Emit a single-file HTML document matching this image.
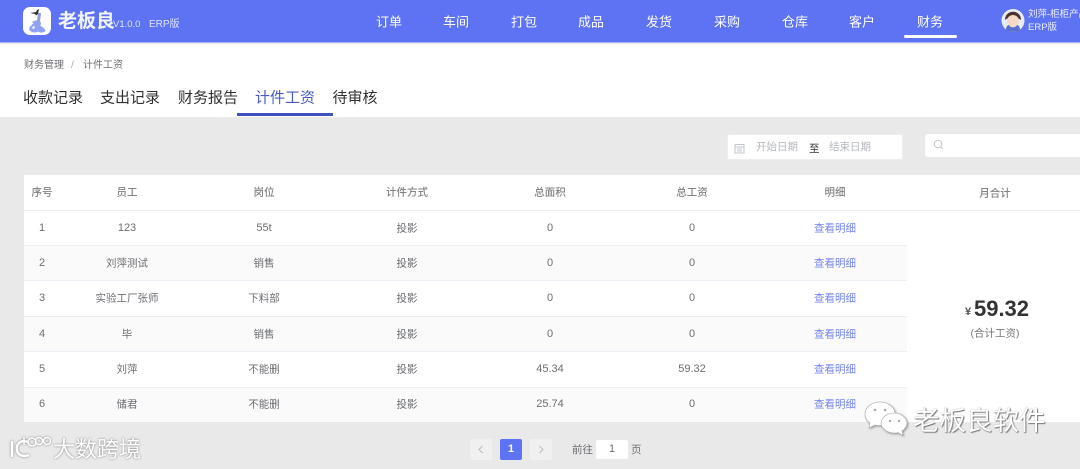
<!DOCTYPE html>
<html lang="zh"><head><meta charset="utf-8"><title>计件工资</title>
<style>
*{box-sizing:border-box}
html,body{margin:0;padding:0;width:1080px;height:469px;overflow:hidden;background:#e9e9e9;font-family:"Liberation Sans","Noto Sans CJK SC",sans-serif;position:relative}
.a{position:absolute;white-space:nowrap}
.c{position:absolute;white-space:nowrap;transform:translate(-50%,-50%);font-size:10.5px;color:#6c6e73}
.d{font-size:11px}
.n{font-size:13px;color:#fff;transform:translate(-50%,-50%)}
.t{font-size:15px;color:#303133;top:97px}
.h{color:#828282;font-weight:500;font-size:10.5px}
.l{color:#7585f0}
.r{position:absolute;left:24px;width:883px;border-bottom:1px solid #ebeef5}
</style></head><body>
<div class="a" style="left:0;top:0;width:1080px;height:43px;background:#5e73f4;border-bottom:1px solid #a9b4f8"></div>
<div class="a" style="left:23px;top:7px;width:28px;height:28px;background:#fff;border-radius:7px"></div>
<svg class="a" style="left:23px;top:7px" width="28" height="28" viewBox="0 0 28 28"><path d="M13 14c4-1 6 3 3 5 3 1 5 2 6 5-3 2-5 1-7 0-2 1.500-6 1.500-8-1-1-2 1-5 3-4-1 1-2 2-1 3 2 1 4-1 3-3-1-1-3-1-3-1 2-1 3-2 1-3z" fill="#93a2f0" stroke="#93a2f0"/><path d="M15 6l-1 8h3l1-8z" fill="#8d9cec"/><path d="M7 6l5 1 1 1.500 2-1.500 1-5-2 1-1 2z" fill="#333"/></svg>
<div class="a" style="left:58px;top:9px;font-size:19px;font-weight:700;color:#f4f6ff;line-height:26px">老板良</div>
<div class="a" style="left:113px;top:18px;font-size:9.5px;color:#dfe4fd;line-height:13px">V1.0.0</div>
<div class="a" style="left:149px;top:18px;font-size:10px;color:#dfe4fd;line-height:13px">ERP版</div>
<div class="c n" style="left:389px;top:21px">订单</div>
<div class="c n" style="left:456px;top:21px">车间</div>
<div class="c n" style="left:524px;top:21px">打包</div>
<div class="c n" style="left:591px;top:21px">成品</div>
<div class="c n" style="left:659px;top:21px">发货</div>
<div class="c n" style="left:727px;top:21px">采购</div>
<div class="c n" style="left:795px;top:21px">仓库</div>
<div class="c n" style="left:862px;top:21px">客户</div>
<div class="c n" style="left:930px;top:21px">财务</div>
<div class="a" style="left:904px;top:35px;width:53px;height:3px;background:#fff;border-radius:2px"></div>
<svg class="a" style="left:1001px;top:8px" width="24" height="25" viewBox="0 0 24 25"><circle cx="12" cy="12.5" r="11.500" fill="#e9ebf5"/><path d="M4 12c0-11 16-11 16 0-3-3-13-3-16 0z" fill="#4a3430"/><ellipse cx="12" cy="13" rx="6" ry="6" fill="#f5d9c6"/><path d="M5 22c0-5 3-5 3-5 1 3 7 3 8 0 0 0 3 0 3 5-3 2.500-11 2.500-14 0z" fill="#5a6fd0"/></svg>
<div class="a" style="left:1028px;top:8px;font-size:9.500px;color:#eef0fe;line-height:13px">刘萍-柜柜产品</div>
<div class="a" style="left:1028px;top:21px;font-size:9.500px;color:#eef0fe;line-height:13px">ERP版</div>

<div class="a" style="left:0;top:44px;width:1080px;height:73px;background:#fff"></div>
<div class="a" style="left:24px;top:59px;font-size:10px;color:#6c6e73;line-height:13px">财务管理</div>
<div class="a" style="left:71px;top:59px;font-size:10px;color:#aaa;line-height:13px">/</div>
<div class="a" style="left:83px;top:59px;font-size:10px;color:#6c6e73;line-height:13px">计件工资</div>
<div class="c t" style="left:53px">收款记录</div>
<div class="c t" style="left:130px">支出记录</div>
<div class="c t" style="left:208px">财务报告</div>
<div class="c t" style="left:285px;color:#4a5bc4">计件工资</div>
<div class="c t" style="left:355px">待审核</div>
<div class="a" style="left:237px;top:113px;width:96px;height:3px;background:#3f51c0"></div>

<div class="a" style="left:727px;top:134px;width:176px;height:26px;background:#fff;border:1px solid #eee;border-radius:2px"></div>
<svg class="a" style="left:734px;top:143px" width="11" height="11" viewBox="0 0 11 11"><rect x="1" y="1.500" width="9" height="8.500" fill="none" stroke="#c0c4cc"/><path d="M1 4h9M3 6h5M3 8h5" stroke="#c0c4cc"/></svg>
<div class="a" style="left:756px;top:140px;font-size:10.500px;color:#b5b8bf;line-height:14px">开始日期</div>
<div class="a" style="left:809px;top:142px;font-size:10.500px;color:#303133;line-height:14px">至</div>
<div class="a" style="left:829px;top:140px;font-size:10.500px;color:#b5b8bf;line-height:14px">结束日期</div>
<div class="a" style="left:925px;top:134px;width:160px;height:23px;background:#fff;border-radius:3px"></div>
<svg class="a" style="left:933px;top:139px" width="11" height="11" viewBox="0 0 11 11"><circle cx="5" cy="5" r="3.800" fill="none" stroke="#c0c4cc"/><path d="M8 8l2 2" stroke="#c0c4cc"/></svg>

<div class="a" style="left:24px;top:175px;width:1056px;height:247px;background:#fff"></div>
<div class="a" style="left:24px;top:210px;width:1056px;height:1px;background:#ebeef5"></div>
<div class="a" style="left:24px;top:246px;width:883px;height:35px;background:#fafafa"></div>
<div class="a" style="left:24px;top:317px;width:883px;height:35px;background:#fafafa"></div>
<div class="a" style="left:24px;top:387px;width:883px;height:35px;background:#fafafa"></div>
<div class="r" style="top:245px;height:1px"></div><div class="r" style="top:280px;height:1px"></div><div class="r" style="top:316px;height:1px"></div><div class="r" style="top:351px;height:1px"></div><div class="r" style="top:387px;height:1px"></div>

<div class="c h" style="left:42px;top:192px">序号</div><div class="c h" style="left:127px;top:192px">员工</div><div class="c h" style="left:264px;top:192px">岗位</div><div class="c h" style="left:407px;top:192px">计件方式</div><div class="c h" style="left:550px;top:192px">总面积</div><div class="c h" style="left:692px;top:192px">总工资</div><div class="c h" style="left:835px;top:192px">明细</div><div class="c h" style="left:995px;top:193px">月合计</div>

<div class="c d" style="left:42px;top:228px">1</div><div class="c d" style="left:127px;top:228px">123</div><div class="c d" style="left:264px;top:228px">55t</div><div class="c" style="left:407px;top:228px">投影</div><div class="c d" style="left:550px;top:228px">0</div><div class="c d" style="left:692px;top:228px">0</div><div class="c l" style="left:835px;top:228px">查看明细</div>
<div class="c d" style="left:42px;top:263px">2</div><div class="c" style="left:127px;top:263px">刘萍测试</div><div class="c" style="left:264px;top:263px">销售</div><div class="c" style="left:407px;top:263px">投影</div><div class="c d" style="left:550px;top:263px">0</div><div class="c d" style="left:692px;top:263px">0</div><div class="c l" style="left:835px;top:263px">查看明细</div>
<div class="c d" style="left:42px;top:298px">3</div><div class="c" style="left:127px;top:298px">实验工厂张师</div><div class="c" style="left:264px;top:298px">下料部</div><div class="c" style="left:407px;top:298px">投影</div><div class="c d" style="left:550px;top:298px">0</div><div class="c d" style="left:692px;top:298px">0</div><div class="c l" style="left:835px;top:298px">查看明细</div>
<div class="c d" style="left:42px;top:334px">4</div><div class="c" style="left:127px;top:334px">毕</div><div class="c" style="left:264px;top:334px">销售</div><div class="c" style="left:407px;top:334px">投影</div><div class="c d" style="left:550px;top:334px">0</div><div class="c d" style="left:692px;top:334px">0</div><div class="c l" style="left:835px;top:334px">查看明细</div>
<div class="c d" style="left:42px;top:369px">5</div><div class="c" style="left:127px;top:369px">刘萍</div><div class="c" style="left:264px;top:369px">不能删</div><div class="c" style="left:407px;top:369px">投影</div><div class="c d" style="left:550px;top:369px">45.34</div><div class="c d" style="left:692px;top:369px">59.32</div><div class="c l" style="left:835px;top:369px">查看明细</div>
<div class="c d" style="left:42px;top:404px">6</div><div class="c" style="left:127px;top:404px">储君</div><div class="c" style="left:264px;top:404px">不能删</div><div class="c" style="left:407px;top:404px">投影</div><div class="c d" style="left:550px;top:404px">25.74</div><div class="c d" style="left:692px;top:404px">0</div><div class="c l" style="left:835px;top:404px">查看明细</div>

<div class="c" style="left:968px;top:312px;font-size:11px;font-weight:700;color:#555">¥</div>
<div class="c" style="left:1001.500px;top:309px;font-size:22px;font-weight:700;color:#333">59.32</div>
<div class="c" style="left:995px;top:333px;font-size:10.500px;color:#777">(合计工资)</div>

<div class="a" style="left:470px;top:439px;width:22px;height:21px;background:#f0f0f0;border-radius:2px"></div>
<svg class="a" style="left:477px;top:445px" width="8" height="9" viewBox="0 0 8 9"><path d="M5.500 1L2 4.500 5.500 8" fill="none" stroke="#bbb"/></svg>
<div class="a" style="left:500px;top:439px;width:22px;height:21px;background:#5e73f4;border-radius:2px;color:#fff;font-size:11px;font-weight:700;text-align:center;line-height:21px">1</div>
<div class="a" style="left:530px;top:439px;width:22px;height:21px;background:#f0f0f0;border-radius:2px"></div>
<svg class="a" style="left:537px;top:445px" width="8" height="9" viewBox="0 0 8 9"><path d="M2.500 1L6 4.500 2.500 8" fill="none" stroke="#bbb"/></svg>
<div class="a" style="left:572px;top:443px;font-size:10.500px;color:#6c6e73;line-height:14px">前往</div>
<div class="a" style="left:596px;top:440px;width:32px;height:19px;background:#fff;border-radius:2px;font-size:11px;color:#6c6e73;text-align:center;line-height:19px">1</div>
<div class="a" style="left:631px;top:443px;font-size:10.500px;color:#6c6e73;line-height:14px">页</div>

<svg class="a" style="left:8px;top:434px;filter:drop-shadow(0 0 1px #777)" width="44" height="28" viewBox="0 0 44 28"><g fill="none" stroke="#fff" stroke-width="2.500"><path d="M4 7v16"/><path d="M20 8c-8-3-12 3-11 8 1 6 7 7 12 5"/><path d="M16 3v8" stroke-width="1.500"/><circle cx="24" cy="8" r="4" stroke-width="1.500"/><circle cx="31" cy="7" r="3.500" stroke-width="1.500"/><circle cx="39" cy="7" r="3.500" stroke-width="1.500"/></g></svg>
<div class="a" style="left:53px;top:437px;font-size:22px;color:#fff;line-height:26px;text-shadow:0 0 2px #777">大数跨境</div>

<svg class="a" style="left:864px;top:400px;filter:drop-shadow(1px 1px 1px #999)" width="46" height="40" viewBox="0 0 46 40"><g fill="#fff" stroke="#aaa" stroke-width=".6"><path d="M16 2c-8 0-15 5-15 12 0 4 2 7 5 9l-1 5 6-3c2 .5 3 .5 5 .5 8 0 15-6 15-12S24 2 16 2z"/><path d="M30 13c-7 0-13 5-13 10s6 10 13 10c1.500 0 3 0 4-.5l5 3-1-4.500c3-2 5-5 5-8 0-5-6-10-13-10z"/></g><g fill="#aaa"><circle cx="11" cy="10" r="1.300"/><circle cx="21" cy="10" r="1.300"/><circle cx="26" cy="21" r="1.200"/><circle cx="35" cy="21" r="1.200"/></g></svg>
<div class="a" style="left:913px;top:404px;font-size:26.500px;color:#fff;line-height:34px;text-shadow:1px 1px 1px #777,0 0 1px #888">老板良软件</div>
</body></html>
